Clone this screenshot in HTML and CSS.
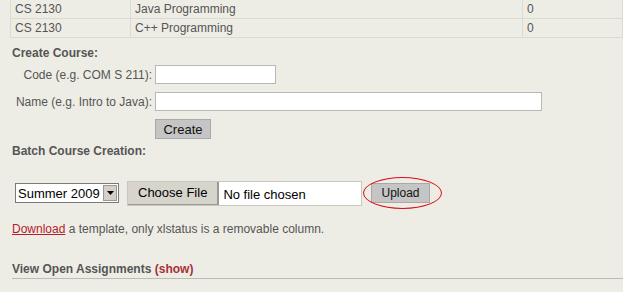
FILE: index.html
```
<!DOCTYPE html>
<html lang="en">

<head>
    <meta charset="UTF-8">
    <title>Courses</title>
    <link rel="stylesheet" href="styles.css">
</head>

<body>
    <table class="courses">
        <tr>
            <td class="code">CS 2130</td>
            <td class="name">Java Programming</td>
            <td class="count">0</td>
        </tr>
        <tr>
            <td class="code">CS 2130</td>
            <td class="name">C++ Programming</td>
            <td class="count">0</td>
        </tr>
    </table>

    <h4 class="section">Create Course:</h4>
    <div class="createForm">
        <label for="code">Code (e.g. COM S 211):</label>
        <input type="text" id="code" class="codeInput">
        <label for="cname">Name (e.g. Intro to Java):</label>
        <input type="text" id="cname" class="nameInput">
        <span></span>
        <div><button class="btn create">Create</button></div>
    </div>

    <h4 class="section batch">Batch Course Creation:</h4>
    <div class="batchRow">
        <div class="select">
            <span class="selectText">Summer 2009</span>
            <span class="selectArrow"><svg width="7" height="4" viewBox="0 0 7 4"><path d="M0 0h7L3.5 4z" fill="#000"/></svg></span>
        </div>
        <div class="fileBox">
            <span class="chooseBtn">Choose File</span>
            <span class="fileName">No file chosen</span>
        </div>
        <div class="uploadWrap">
            <button class="btn upload">Upload</button>
            <span class="ring"></span>
        </div>
    </div>

    <p class="note"><a href="#">Download</a> a template, only xlstatus is a removable column.</p>

    <h4 class="section open">View Open Assignments <a href="#">(show)</a></h4>
</body>

</html>
```
FILE: styles.css
```
body {
    margin: 0;
    padding: 0 0 0 10px;
    background-color: #eeede5;
    font-family: "Liberation Sans", Arial, sans-serif;
    font-size: 12px;
    color: #555;
    overflow: hidden;
}

/* Course table */
.courses {
    border-collapse: collapse;
    width: 100%;
    margin-top: -1px;
}

.courses td {
    border: 1px solid #dcdbd2;
    height: 18px;
    padding: 0 0 0 4px;
}

.courses .code {
    width: 115px;
}

.courses .name {
    width: 387px;
}

/* Sections */
.section {
    margin: 8px 0 0 2px;
    font-size: 12px;
    font-weight: bold;
    color: #555;
}

.createForm {
    display: grid;
    grid-template-columns: 142px auto;
    column-gap: 3px;
    row-gap: 8px;
    align-items: center;
    margin-top: 5px;
}

.createForm label {
    text-align: right;
    color: #555;
}

input[type="text"] {
    height: 19px;
    box-sizing: border-box;
    border: 1px solid #b9b9b4;
    background: #fff;
    margin: 0;
}

.codeInput {
    width: 121px;
}

.nameInput {
    width: 387px;
}

.btn {
    font-family: "Liberation Sans", Arial, sans-serif;
    font-size: 12px;
    color: #111;
    background: #c5c5c5;
    border: 1px solid #a9a9a9;
    padding: 0 8px;
    height: 20px;
    margin: 0;
}

.create {
    width: 56px;
    font-size: 13px;
    padding: 0;
}

.batch {
    margin-top: 5px;
}

.batchRow {
    display: flex;
    align-items: center;
    margin: 23px 0 0 5px;
    height: 24px;
}

.select {
    display: flex;
    align-items: center;
    width: 102px;
    height: 18px;
    border: 1px solid #7a7a7a;
    background: #fff;
    font-size: 13px;
    color: #000;
}

.selectText {
    flex: 1;
    padding-left: 2px;
}

.selectArrow {
    width: 14px;
    height: 16px;
    margin-right: 1px;
    background: #d4d0c8;
    border: 1px solid #999;
    box-sizing: border-box;
    display: flex;
    align-items: center;
    justify-content: center;
}

.fileBox {
    display: flex;
    margin-left: 8px;
    height: 23px;
    width: 233px;
    border: 1px solid #c9c8c0;
    background: #fff;
    font-size: 13px;
    color: #000;
}

.chooseBtn {
    display: flex;
    align-items: center;
    padding: 0 10px;
    background: #d7d4cc;
    border-right: 2px solid #9c9a94;
    border-bottom: 1px solid #9c9a94;
}

.fileName {
    display: flex;
    align-items: center;
    padding: 3px 0 0 4px;
}

.uploadWrap {
    position: relative;
    margin-left: 9px;
}

.upload {
    width: 59px;
    height: 20px;
    font-size: 12px;
}

.ring {
    position: absolute;
    left: -8px;
    top: -6px;
    width: 77px;
    height: 30px;
    border: 1.5px solid #d8111c;
    border-radius: 50%;
}

.note {
    margin: 17px 0 0 2px;
}

.note a {
    color: #b5202a;
}

.open {
    margin-top: 26px;
    padding-bottom: 2px;
    border-bottom: 1px solid #bdbcb4;
}

.open a {
    color: #a5303a;
    text-decoration: none;
}
```
